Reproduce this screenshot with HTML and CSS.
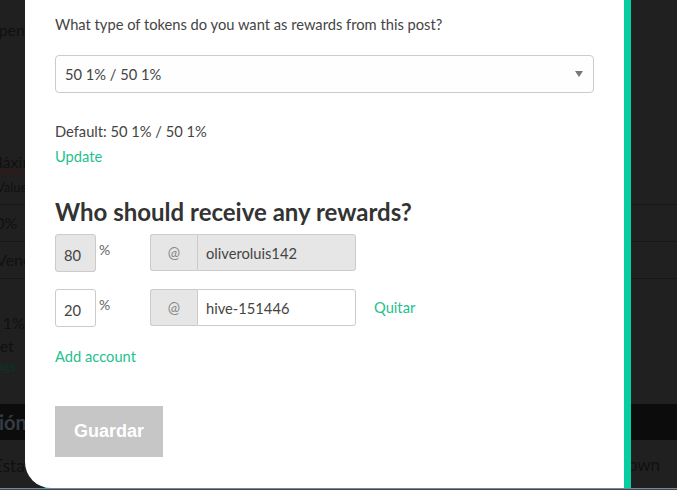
FILE: index.html
```html
<!DOCTYPE html>
<html lang="es">
<head>
<meta charset="UTF-8">
<title>Beneficiarios</title>
<link rel="stylesheet" href="styles.css">
</head>
<body>
    <div class="page">
        <p class="bg-line bg-top">Open the post</p>
        <p class="bg-line bg-mark"><span class="typo">Máximo</span></p>
        <p class="bg-line bg-small">Values are</p>
        <div class="bg-row">50%</div>
        <div class="bg-row">Venezuela</div>
        <p class="bg-line bg-pct">50 1% / 50 1%</p>
        <p class="bg-line bg-et">Set</p>
        <p class="bg-line bg-link">Settings</p>
        <div class="bg-band">Opción</div>
        <p class="bg-line bg-foot">Esta publicación</p>
        <p class="bg-right">Dropdown</p>
    </div>

    <div class="modal">
        <p class="question">What type of tokens do you want as rewards from this post?</p>
        <div class="select">
            <span>50 1% / 50 1%</span>
            <span class="caret"></span>
        </div>
        <p class="default">Default: 50 1% / 50 1%</p>
        <a class="link" href="#">Update</a>

        <h2>Who should receive any rewards?</h2>

        <div class="bene-row">
            <input class="pct" type="text" value="80" disabled>
            <span class="pct-sign">%</span>
            <div class="account">
                <span class="at">@</span>
                <input class="name" type="text" value="oliveroluis142" disabled>
            </div>
        </div>
        <div class="bene-row">
            <input class="pct" type="text" value="20">
            <span class="pct-sign">%</span>
            <div class="account">
                <span class="at">@</span>
                <input class="name" type="text" value="hive-151446">
            </div>
            <a class="link remove" href="#">Quitar</a>
        </div>

        <a class="link add" href="#">Add account</a>

        <button class="save" disabled>Guardar</button>
    </div>

    <div class="window-edge"></div>
</body>
</html>
```

FILE: styles.css
```css
html, body {
    margin: 0;
    height: 490px;
    overflow: hidden;
}
body {
    position: relative;
    background-color: #202020;
    font-family: 'Lato', sans-serif;
}

/* page behind the dimmed overlay */
.page {
    color: #101010;
    font-size: 16px;
}
.bg-line {
    margin: 0;
    white-space: nowrap;
}
.bg-top {
    margin-left: -14px;
    padding-top: 20px;
}
.bg-mark {
    margin-top: 113px;
    margin-left: -12px;
}
.typo {
    text-decoration: underline wavy #3a1414;
}
.bg-small {
    margin-top: 8px;
    margin-left: -4px;
    font-size: 13px;
    padding-bottom: 9px;
    border-bottom: 1px solid #171717;
}
.bg-row {
    height: 36px;
    line-height: 36px;
    margin-left: -14px;
    border-bottom: 1px solid #171717;
}
.bg-row + .bg-row {
    margin-left: -4px;
}
.bg-pct {
    margin-top: 34px;
    margin-left: -20px;
}
.bg-et {
    margin-top: 4px;
    margin-left: -9px;
}
.bg-link {
    margin-top: 2px;
    margin-left: -33px;
    color: #0d3327;
    font-size: 14px;
}
.bg-band {
    margin-top: 30px;
    height: 36px;
    line-height: 36px;
    background-color: #0c0c0c;
    color: #353c45;
    font-weight: bold;
    font-size: 20px;
    text-indent: -38px;
}
.bg-foot {
    margin-top: 15px;
    margin-left: -7px;
    font-size: 17px;
}
.bg-right {
    position: absolute;
    right: 17px;
    top: 454px;
    margin: 0;
    font-size: 17px;
}

/* dialog */
.modal {
    position: absolute;
    left: 25px;
    top: -20px;
    width: 539px;
    height: 508px;
    padding: 0 30px;
    background-color: #fff;
    border-radius: 0 0 0 26px;
    box-shadow: 7px 3px 0 #05cfa1;
    color: #444;
    font-size: 14.7px;
}
.question {
    margin: 34px 0 21px;
    line-height: 20px;
}
.select {
    display: flex;
    justify-content: space-between;
    align-items: center;
    height: 36px;
    padding: 0 10px 0 9px;
    border: 1px solid #cbcbcb;
    border-radius: 4px;
    background-color: #fefefe;
    color: #444;
}
.caret {
    width: 0;
    height: 0;
    border-left: 4px solid transparent;
    border-right: 4px solid transparent;
    border-top: 6px solid #777;
}
.default {
    margin: 25px 0 0;
    line-height: 26px;
}
.link {
    display: block;
    line-height: 25px;
    color: #1fbf8f;
    text-decoration: none;
}
h2 {
    margin: 28px 0 7px;
    line-height: 30px;
    font-size: 24px;
    color: #333;
}
.bene-row {
    display: flex;
    align-items: flex-start;
    margin-bottom: 17px;
}
input {
    font-family: inherit;
    font-size: 14.7px;
    color: #444;
    box-sizing: border-box;
    height: 38px;
    border: 1px solid #cbcbcb;
    background-color: #fff;
    outline: none;
}
input:disabled {
    background-color: #e6e6e6;
    color: #444;
}
.pct {
    width: 41px;
    padding: 4px 0 0 8px;
    border-radius: 3px;
}
.pct-sign {
    width: 51px;
    padding: 9px 0 0 3px;
    font-size: 14px;
    line-height: 14px;
    color: #666;
}
.account {
    display: flex;
    width: 206px;
}
.at {
    flex: none;
    box-sizing: border-box;
    width: 47px;
    height: 37px;
    line-height: 35px;
    text-align: center;
    background-color: #e6e6e6;
    border: 1px solid #cbcbcb;
    border-right: none;
    border-radius: 3px 0 0 3px;
    color: #888;
}
.name {
    flex: 1;
    min-width: 0;
    height: 37px;
    padding: 0 8px;
    border-radius: 0 3px 3px 0;
}
.remove {
    margin-left: 18px;
    line-height: 36px;
}
.save {
    display: block;
    margin-top: 37px;
    width: 108px;
    height: 51px;
    border: none;
    background-color: #c6c6c7;
    color: #fff;
    font-family: 'Liberation Sans', Arial, sans-serif;
    font-weight: bold;
    font-size: 18px;
}

.window-edge {
    position: absolute;
    left: 0;
    right: 0;
    bottom: 0;
    height: 1px;
    border-top: 1px solid #7b8794;
    background-color: #3e4955;
}
```
